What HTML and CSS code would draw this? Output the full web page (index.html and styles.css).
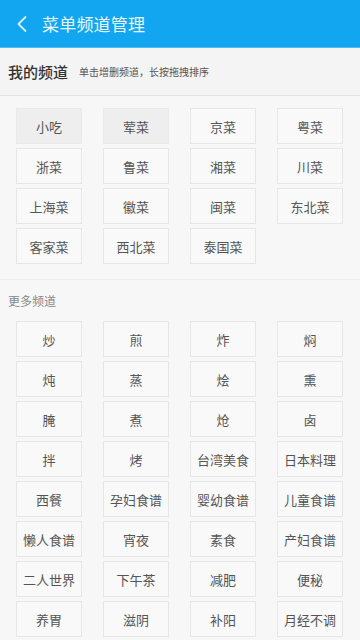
FILE: index.html
```html
<!DOCTYPE html>
<html lang="zh">
<head>
<meta charset="utf-8">
<meta name="viewport" content="width=360">
<link rel="stylesheet" href="styles.css">
</head>
<body>
<header class="topbar">
  <svg class="back" width="12" height="18" viewBox="0 0 12 18"><path d="M9.5 2 L2.5 9 L9.5 16" fill="none" stroke="#d4f0fd" stroke-width="1.8" stroke-linecap="round" stroke-linejoin="round"/></svg>
  <span class="title">菜单频道管理</span>
</header>
<section class="mine-head">
  <span class="mine-title">我的频道</span>
  <span class="mine-tip">单击增删频道，长按拖拽排序</span>
</section>
<div class="grid mine">
  <div class="item on">小吃</div>
  <div class="item on">荤菜</div>
  <div class="item">京菜</div>
  <div class="item">粤菜</div>
  <div class="item">浙菜</div>
  <div class="item">鲁菜</div>
  <div class="item">湘菜</div>
  <div class="item">川菜</div>
  <div class="item">上海菜</div>
  <div class="item">徽菜</div>
  <div class="item">闽菜</div>
  <div class="item">东北菜</div>
  <div class="item">客家菜</div>
  <div class="item">西北菜</div>
  <div class="item">泰国菜</div>
</div>
<div class="more-head">更多频道</div>
<div class="grid">
  <div class="item">炒</div>
  <div class="item">煎</div>
  <div class="item">炸</div>
  <div class="item">焖</div>
  <div class="item">炖</div>
  <div class="item">蒸</div>
  <div class="item">烩</div>
  <div class="item">熏</div>
  <div class="item">腌</div>
  <div class="item">煮</div>
  <div class="item">炝</div>
  <div class="item">卤</div>
  <div class="item">拌</div>
  <div class="item">烤</div>
  <div class="item">台湾美食</div>
  <div class="item">日本料理</div>
  <div class="item">西餐</div>
  <div class="item">孕妇食谱</div>
  <div class="item">婴幼食谱</div>
  <div class="item">儿童食谱</div>
  <div class="item">懒人食谱</div>
  <div class="item">宵夜</div>
  <div class="item">素食</div>
  <div class="item">产妇食谱</div>
  <div class="item">二人世界</div>
  <div class="item">下午茶</div>
  <div class="item">减肥</div>
  <div class="item">便秘</div>
  <div class="item">养胃</div>
  <div class="item">滋阴</div>
  <div class="item">补阳</div>
  <div class="item">月经不调</div>
</div>
</body>
</html>
```
FILE: styles.css
```css
html, body {
  margin: 0;
  padding: 0;
}
body {
  width: 360px;
  background: #f7f7f7;
  font-family: "Noto Sans CJK SC", "Noto Sans", sans-serif;
  overflow: hidden;
}
.topbar {
  height: 48px;
  background: #12a6f0;
  display: flex;
  align-items: center;
  box-sizing: border-box;
  padding-left: 16px;
  border-bottom: 1px solid #4fbcf3;
}
.back {
  display: block;
  margin-right: 14px;
}
.title {
  color: #e8f7fe;
  font-size: 17px;
  letter-spacing: 0.2px;
}
.mine-head {
  height: 48px;
  box-sizing: border-box;
  background: #f4f4f4;
  border-bottom: 1px solid #e4e4e4;
  display: flex;
  align-items: center;
  padding-left: 8px;
}
.mine-title {
  font-size: 15px;
  color: #333;
  font-weight: 500;
  margin-right: 11px;
}
.mine-tip {
  font-size: 10px;
  color: #555;
}
.grid {
  display: grid;
  grid-template-columns: repeat(4, 66px);
  column-gap: 21px;
  row-gap: 4px;
  padding: 0 16px;
}
.grid.mine {
  padding-top: 12px;
  padding-bottom: 15px;
  border-bottom: 1px solid #ebebeb;
}
.item {
  height: 36px;
  box-sizing: border-box;
  border: 1px solid #e6e6e6;
  background: #f9f9f9;
  color: #555;
  font-size: 13px;
  display: flex;
  align-items: center;
  justify-content: center;
}
.item.on {
  background: #eeeeee;
  border-color: #eaeaea;
}
.more-head {
  height: 41px;
  box-sizing: border-box;
  display: flex;
  align-items: center;
  padding-left: 8px;
  font-size: 12px;
  color: #888;
}
```
